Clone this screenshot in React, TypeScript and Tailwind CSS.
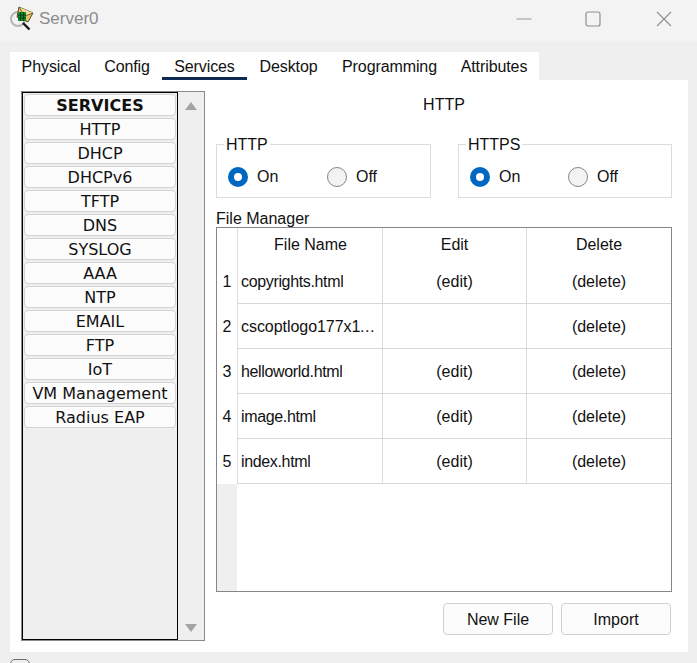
const tabs = [
  { label: "Physical", width: "w-[82px]" },
  { label: "Config", width: "w-[70px]" },
  { label: "Services", width: "w-[85px]" },
  { label: "Desktop", width: "w-[83px]" },
  { label: "Programming", width: "w-[119px]" },
  { label: "Attributes", width: "w-[90px]" },
];
const services = ["HTTP", "DHCP", "DHCPv6", "TFTP", "DNS", "SYSLOG", "AAA", "NTP", "EMAIL", "FTP", "IoT", "VM Management", "Radius EAP"];
const files = [
  { name: "copyrights.html", edit: true, tracking: "tracking-[-0.35px]" },
  { name: "cscoptlogo177x111.jpg", edit: false, tracking: "tracking-[-0.05px]" },
  { name: "helloworld.html", edit: true, tracking: "tracking-[-0.35px]" },
  { name: "image.html", edit: true, tracking: "tracking-[-0.35px]" },
  { name: "index.html", edit: true, tracking: "tracking-[-0.35px]" },
];

function AppIcon() {
  return (
    <svg width="26" height="26" viewBox="0 0 26 26" className="shrink-0">
      <circle cx="9" cy="14" r="7" fill="#f2f2f2" stroke="#b4b4b4" strokeWidth="2" />
      <path d="M10 2 L24 8 L19 17 L8 12 Z" fill="#e6c06a" stroke="#4a3c18" strokeWidth="0.9" />
      <path d="M10 2 L16 11 L24 8" fill="#f3dc9c" stroke="#6a5522" strokeWidth="0.9" />
      <rect x="9" y="7" width="8" height="9" fill="#0c8a2c" />
      <path d="M11.5 7 V16 M14.5 7 V16 M9 10 H17 M9 13 H17" stroke="#06300f" strokeWidth="0.8" />
      <path d="M14 18 L20.5 24.5" stroke="#161616" strokeWidth="2.4" />
    </svg>
  );
}

function Radio({ on, label, className }: { on: boolean; label: string; className: string }) {
  return (
    <div className={`flex items-center gap-[9px] ${className}`}>
      {on ? (
        <span className="w-[20px] h-[20px] rounded-full border-[6px] border-[#0067c0] bg-white" />
      ) : (
        <span className="w-[20px] h-[20px] rounded-full border border-[#858585] bg-[#f3f3f3]" />
      )}
      <span>{label}</span>
    </div>
  );
}

function OnOffBox({ title, width, offGap }: { title: string; width: string; offGap: string }) {
  return (
    <div className={`relative h-[54px] border border-[#dcdcdc] pl-[11px] flex items-start pt-[20px] ${width}`}>
      <span className="absolute left-[7px] top-[-9px] bg-white px-[2px] leading-[18px]">{title}</span>
      <Radio on label="On" className={offGap} />
      <Radio on={false} label="Off" className="" />
    </div>
  );
}

export default function App() {
  return (
    <div className="w-[697px] h-[663px] overflow-hidden bg-[#efefef] text-[16px] text-[#111] font-['Liberation_Sans',Arial,sans-serif]">
      <div className="h-[41px] bg-[#f3f3f3] flex items-center pl-[9px]">
        <div className="w-[26px] h-[26px] -mt-[5px]">
          <AppIcon />
        </div>
        <span className="ml-[4px] text-[17px] text-[#8c8c8c] -mt-[3px]">Server0</span>
        <div className="ml-auto flex items-center h-full -mt-[4px] pr-[25px]">
          <svg width="16" height="16" viewBox="0 0 16 16" className="mr-[53px]">
            <path d="M0.5 8 H15.5" stroke="#9a9a9a" strokeWidth="1" />
          </svg>
          <svg width="16" height="16" viewBox="0 0 16 16" className="mr-[55px]">
            <rect x="1" y="1" width="14" height="14" rx="2" fill="none" stroke="#8f8f8f" strokeWidth="1.2" />
          </svg>
          <svg width="16" height="16" viewBox="0 0 16 16">
            <path d="M1 1 L15 15 M15 1 L1 15" stroke="#8f8f8f" strokeWidth="1.1" />
          </svg>
        </div>
      </div>

      <div className="mx-[10px] mt-[11px]">
        <div className="flex w-[529px] h-[28px] bg-white pl-[0px]">
          {tabs.map((t) => (
            <div
              key={t.label}
              className={`${t.width} h-[28px] leading-[29px] text-center tracking-[-0.1px] ${t.label === "Services" ? "border-b-[3px] border-[#0f2a52]" : ""}`}
            >
              {t.label}
            </div>
          ))}
        </div>

        <div className="w-[678px] h-[572px] bg-white pt-[11px] pl-[11px] flex">
          <div className="w-[184px] h-[550px] border border-[#8a8a8a] bg-[#efefef] flex">
            <div className="w-[156px] h-full border border-black px-[1px] pt-[1px] flex flex-col gap-[2px] font-['DejaVu_Sans',Verdana,sans-serif] text-[16px] text-[#111]">
              <div className="h-[22px] leading-[22px] bg-[#fcfcfc] border border-[#d2d2d2] rounded-[4px] text-center font-bold">SERVICES</div>
              {services.map((s) => (
                <div key={s} className="h-[22px] leading-[22px] bg-[#fcfcfc] border border-[#d2d2d2] rounded-[4px] text-center">
                  {s}
                </div>
              ))}
            </div>
            <div className="flex-1 flex flex-col items-center justify-between pt-[10px] pb-[8px]">
              <span className="w-0 h-0 border-x-[6px] border-x-transparent border-b-[8px] border-b-[#a3a3a3]" />
              <span className="w-0 h-0 border-x-[6px] border-x-transparent border-t-[8px] border-t-[#a3a3a3]" />
            </div>
          </div>

          <div className="w-[456px] ml-[11px] flex flex-col">
            <div className="h-[28px] leading-[28px] text-center">HTTP</div>
            <div className="mt-[25px] flex justify-between">
              <OnOffBox title="HTTP" width="w-[215px]" offGap="w-[99px]" />
              <OnOffBox title="HTTPS" width="w-[214px]" offGap="w-[98px]" />
            </div>
            <div className="mt-[11px] h-[18px] leading-[20px]">File Manager</div>
            <div className="h-[365px] border border-[#85858a] flex">
              <div className="w-[20px] flex flex-col">
                <div className="h-[31px] bg-white" />
                {files.map((f, i) => (
                  <div key={f.name} className="h-[45px] bg-white flex items-center justify-center pt-[1px]">
                    {i + 1}
                  </div>
                ))}
                <div className="flex-1 bg-[#efefef]" />
              </div>
              <div className="flex-1 flex flex-col">
                <div className="h-[31px] flex">
                  <div className="w-[145px] border-l border-[#dcdcdc] pl-[1px] text-center leading-[34px]">File Name</div>
                  <div className="w-[144px] border-l border-[#dcdcdc] text-center leading-[34px]">Edit</div>
                  <div className="flex-1 border-l border-[#dcdcdc] text-center leading-[34px]">Delete</div>
                </div>
                {files.map((f) => (
                  <div key={f.name} className="h-[45px] flex border-b border-[#d8d8d8]">
                    <div className="w-[145px] border-l border-[#dcdcdc] pl-[3px] pr-[6px] pt-[1px] flex items-center">
                      <span className={`truncate ${f.tracking}`}>{f.name}</span>
                    </div>
                    <div className="w-[144px] border-l border-[#dcdcdc] pt-[1px] flex items-center justify-center">
                      {f.edit ? "(edit)" : ""}
                    </div>
                    <div className="flex-1 border-l border-[#dcdcdc] pt-[1px] flex items-center justify-center">(delete)</div>
                  </div>
                ))}
              </div>
            </div>
            <div className="mt-[11px] flex justify-end gap-[8px] pr-[1px]">
              <button className="w-[110px] h-[32px] pt-[1px] bg-[#fcfcfc] border border-[#cfcfcf] rounded-[4px]">New File</button>
              <button className="w-[110px] h-[32px] pt-[1px] bg-[#fcfcfc] border border-[#cfcfcf] rounded-[4px]">Import</button>
            </div>
          </div>
        </div>
        <div className="mt-[7px] w-[20px] h-[20px] border border-[#6f6f6f] rounded-[5px]" />
      </div>
    </div>
  );
}
